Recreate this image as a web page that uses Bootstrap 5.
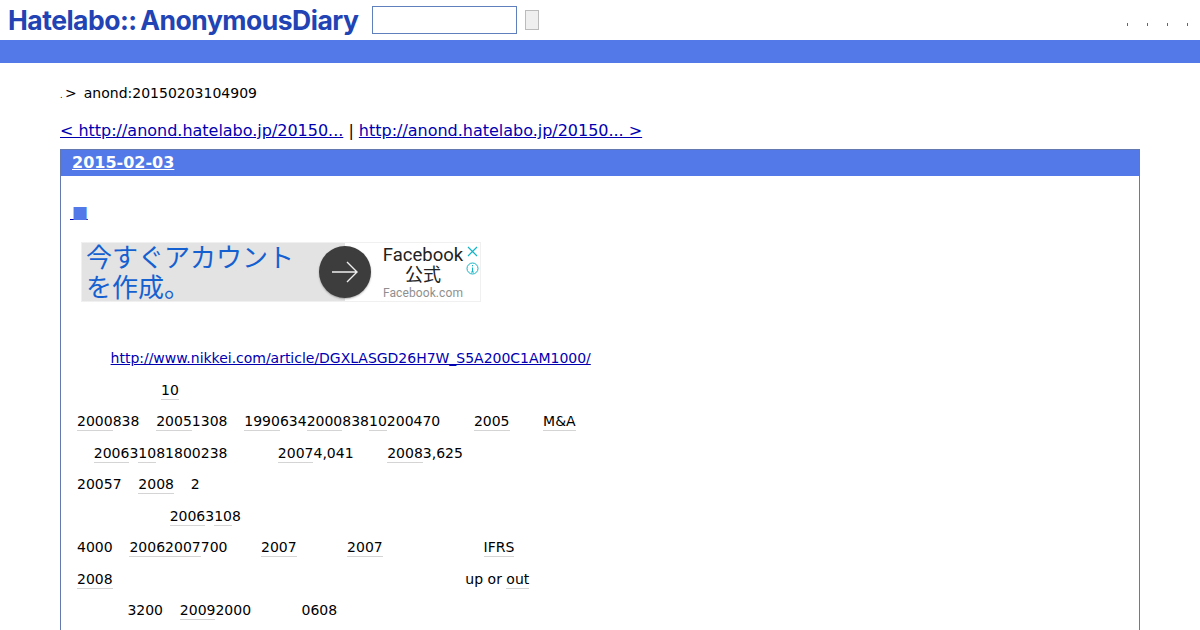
<!DOCTYPE html>
<html lang="ja">
<head>
    <meta charset="UTF-8">
    <title>anond:20150203104909</title>
    <link href="https://cdn.jsdelivr.net/npm/bootstrap@5.3.2/dist/css/bootstrap.min.css" rel="stylesheet">
    <script src="https://cdn.jsdelivr.net/npm/bootstrap@5.3.2/dist/js/bootstrap.bundle.min.js"></script>
    <style>
        html, body {
            height: 630px;
            overflow: hidden;
        }
        body {
            font-family: "DejaVu Sans", sans-serif;
            font-size: 14px;
            line-height: 21px;
            color: #000;
            background: #fff;
        }
        a { color: #0000b0; }
        .hd-top { height: 40px; padding-left: 8px; }
        .hd-logo {
            font-family: "Inter", sans-serif;
            font-weight: 700;
            font-size: 26.5px;
            letter-spacing: -0.5px;
            line-height: 40px;
            color: #2143b4;
            width: 364px;
            white-space: nowrap;
        }
        .hd-search {
            width: 145px;
            height: 28px;
            border: 1px solid #5f7fbd;
            background: #fff;
            padding: 0;
        }
        .hd-btn {
            width: 14px;
            height: 20px;
            margin-left: 8px;
            border: 1px solid #bbb;
            background: #efefef;
            padding: 0;
        }
        .hd-menu { gap: 19px; padding-right: 12px; }
        .hd-dot { width: 1px; height: 3px; background: #666; margin-top: 8px; }
        .hd-bar { height: 23px; background: #5279e7; }
        .page-wrap { padding: 0 60px; }
        .crumb { margin-top: 20px; height: 21px; }
        .crumb-dot { font-size: 8px; margin-right: 2.5px; }
        .pager { font-size: 16px; letter-spacing: -0.015px; line-height: 24px; margin-top: 15px; margin-bottom: 6px; }
        .day-box { border: 1px solid #6379b0; }
        .day-h {
            background: #5279e7;
            height: 26px;
            padding-left: 11px;
            font-size: 16px;
            line-height: 26px;
            font-weight: 700;
        }
        .day-h a { color: #fff; }
        .day-body { padding: 26px 16px 0; }
        .sect-mark { margin-left: -7px; display: block; line-height: 21px; font-size: 17px; }
        .sect-mark a { color: #5279e7; text-decoration-color: #0000b0; }
        .ad-box {
            width: 400px;
            height: 60px;
            margin: 19px 0 0 4px;
            border: 1px solid #f0f0f0;
            background: #fff;
        }
        .ad-left {
            width: 263px;
            background: #e3e3e3;
            color: #1560d0;
            font-family: "Noto Sans CJK JP", sans-serif;
            font-size: 26px;
            line-height: 30px;
            padding: 0 0 0 4px;
            position: relative;
            white-space: nowrap;
        }
        .ad-copy { margin-top: -2px; }
        .ad-go {
            position: absolute;
            left: 237px;
            top: 3px;
            width: 52px;
            height: 52px;
            border-radius: 50%;
            background: #3d3d3d;
            box-shadow: 0 1px 2px rgba(0,0,0,.3);
        }
        .ad-right {
            width: 120px;
            margin-left: 18px;
            text-align: center;
            font-family: "Roboto", "Noto Sans CJK JP", sans-serif;
            color: #222;
            font-size: 18.5px;
            line-height: 20px;
            padding-top: 2px;
        }
        .ad-right small {
            display: block;
            font-size: 12px;
            letter-spacing: .1px;
            color: #8f8f8f;
            line-height: 25px;
            font-weight: 400;
        }
        .ad-cj { font-size: 18px; line-height: 16px; font-family: "Noto Sans CJK JP", sans-serif; }
        .ad-tools { width: 14px; margin-left: -18px; padding-top: 3px; gap: 5px; }
        .body-text { margin-top: 46px; }
        .body-text p { margin: 0 0 10.5px; white-space: pre; }
        .body-text a { letter-spacing: -0.02px; }
        .kw { border-bottom: 1px solid #d4d4d4; padding-bottom: 1px; }
    </style>
</head>
<body>
    <div class="hd-top d-flex align-items-center">
        <div class="hd-logo">Hatelabo::&#8201;AnonymousDiary</div>
        <input class="hd-search" type="text">
        <button class="hd-btn" type="button"></button>
        <div class="hd-menu d-flex ms-auto">
            <span class="hd-dot"></span><span class="hd-dot"></span><span class="hd-dot"></span><span class="hd-dot"></span>
        </div>
    </div>
    <div class="hd-bar"></div>

    <div class="page-wrap">
        <div class="crumb"><span class="crumb-dot">.</span>&gt;&ensp;anond:20150203104909</div>
        <div class="pager"><a href="#">&lt; http://anond.hatelabo.jp/20150...</a> | <a href="#">http://anond.hatelabo.jp/20150... &gt;</a></div>
        <div class="day-box">
            <div class="day-h"><a href="#">2015-02-03</a></div>
            <div class="day-body">
                <div class="sect-mark"><a href="#">&#8202;■</a></div>
                <div class="ad-box d-flex">
                    <div class="ad-left flex-shrink-0">
                        <div class="ad-copy">今すぐアカウント<br>を作成。</div>
                        <div class="ad-go d-flex align-items-center justify-content-center">
                            <svg width="28" height="24" viewBox="0 0 28 24" fill="none" stroke="#eee" stroke-width="1.4"><path d="M1 12H26M16 2L26 12L16 22"/></svg>
                        </div>
                    </div>
                    <div class="ad-right flex-shrink-0">Facebook<div class="ad-cj">公式</div><small>Facebook.com</small></div>
                    <div class="ad-tools d-flex flex-column align-items-center">
                        <svg width="11" height="11" viewBox="0 0 11 11" fill="none" stroke="#12b5c6" stroke-width="1.2"><path d="M1 1L10 10M10 1L1 10"/></svg>
                        <svg width="13" height="13" viewBox="0 0 13 13" fill="none" stroke="#12b5c6" stroke-width="1"><circle cx="6.5" cy="6.5" r="5.5"/><path d="M6.5 5.5V10M6.5 3V4.3M5 10H8"/></svg>
                    </div>
                </div>
                <!-- blanks: one unit is an em space + thin space (1.2em) -->
                <div class="body-text">
                    <p>&emsp;&thinsp;&emsp;&thinsp;<a href="#">http://www.nikkei.com/article/DGXLASGD26H7W_S5A200C1AM1000/</a></p>
                    <p>&emsp;&thinsp;&emsp;&thinsp;&emsp;&thinsp;&emsp;&thinsp;&emsp;&thinsp;<span class="kw">10</span></p>
                    <p><span class="kw">2000</span>838&emsp;&thinsp;<span class="kw">2005</span>1308&emsp;&thinsp;<span class="kw">1990</span>634<span class="kw">2000</span>838<span class="kw">10</span>200470&emsp;&thinsp;&emsp;&thinsp;<span class="kw">2005</span>&emsp;&thinsp;&emsp;&thinsp;<span class="kw">M&amp;A</span></p>
                    <p>&emsp;&thinsp;<span class="kw">2006</span>3<span class="kw">10</span>81800238&emsp;&thinsp;&emsp;&thinsp;&emsp;&thinsp;<span class="kw">2007</span>4,041&emsp;&thinsp;&emsp;&thinsp;<span class="kw">2008</span>3,625</p>
                    <p>20057&emsp;&thinsp;<span class="kw">2008</span>&emsp;&thinsp;2</p>
                    <p>&emsp;&thinsp;&emsp;&thinsp;&emsp;&thinsp;&emsp;&thinsp;&emsp;&thinsp; &thinsp;&#8202;<span class="kw">2006</span>3<span class="kw">10</span>8</p>
                    <p>4000&emsp;&thinsp;<span class="kw">2006</span><span class="kw">2007</span>700&emsp;&thinsp;&emsp;&thinsp;<span class="kw">2007</span>&emsp;&thinsp;&emsp;&thinsp;&emsp;&thinsp;<span class="kw">2007</span>&emsp;&thinsp;&emsp;&thinsp;&emsp;&thinsp;&emsp;&thinsp;&emsp;&thinsp;&emsp;&thinsp;<span class="kw">IFRS</span></p>
                    <p><span class="kw">2008</span>&emsp;&thinsp;&emsp;&thinsp;&emsp;&thinsp;&emsp;&thinsp;&emsp;&thinsp;&emsp;&thinsp;&emsp;&thinsp;&emsp;&thinsp;&emsp;&thinsp;&emsp;&thinsp;&emsp;&thinsp;&emsp;&thinsp;&emsp;&thinsp;&emsp;&thinsp;&emsp;&thinsp;&emsp;&thinsp;&emsp;&thinsp;&emsp;&thinsp;&emsp;&thinsp;&emsp;&thinsp;&emsp;&thinsp;up or <span class="kw">out</span></p>
                    <p>&emsp;&thinsp;&emsp;&thinsp;&emsp;&thinsp;3200&emsp;&thinsp;<span class="kw">2009</span>2000&emsp;&thinsp;&emsp;&thinsp;&emsp;&thinsp;0608</p>
                </div>
            </div>
        </div>
    </div>
</body>
</html>
